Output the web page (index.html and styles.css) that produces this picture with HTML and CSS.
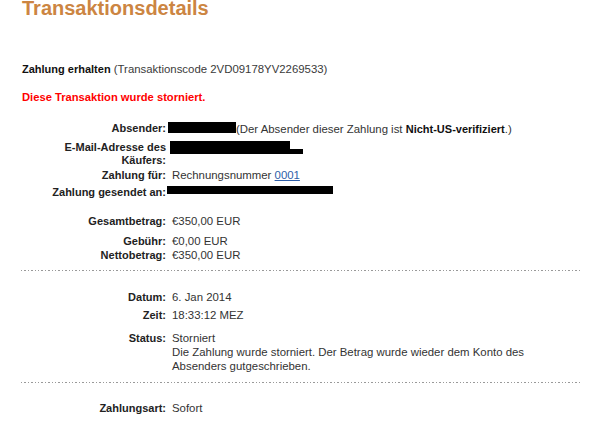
FILE: index.html
```html
<!DOCTYPE html>
<html lang="de">
<head>
  <meta charset="UTF-8">
  <title>Transaktionsdetails</title>
  <link rel="stylesheet" href="styles.css">
</head>
<body>

<div class="page">
  <h1 class="title">Transaktionsdetails</h1>

  <p class="intro"><b>Zahlung erhalten</b> (Transaktionscode 2VD09178YV2269533)</p>
  <p class="cancelled">Diese Transaktion wurde storniert.</p>

  <div class="row sp18">
    <div class="label">Absender:</div>
    <div class="value"><span class="redact redact-sender"></span>(Der Absender dieser Zahlung ist <b>Nicht-US-verifiziert</b>.)</div>
  </div>
  <div class="row sp5">
    <div class="label">E-Mail-Adresse des<br>Käufers:</div>
    <div class="value"><span class="redact redact-mail"></span><span class="redact redact-tail"></span></div>
  </div>
  <div class="row sp2">
    <div class="label">Zahlung für:</div>
    <div class="value">Rechnungsnummer <a href="#">0001</a></div>
  </div>
  <div class="row sp4">
    <div class="label">Zahlung gesendet an:</div>
    <div class="value"><span class="redact redact-to"></span></div>
  </div>

  <div class="row sp16">
    <div class="label">Gesamtbetrag:</div>
    <div class="value">€350,00 EUR</div>
  </div>
  <div class="row sp7">
    <div class="label">Gebühr:</div>
    <div class="value">€0,00 EUR</div>
  </div>
  <div class="row sp1">
    <div class="label">Nettobetrag:</div>
    <div class="value">€350,00 EUR</div>
  </div>

  <div class="divider div-first"></div>

  <div class="row sp20">
    <div class="label">Datum:</div>
    <div class="value">6. Jan 2014</div>
  </div>
  <div class="row sp5">
    <div class="label">Zeit:</div>
    <div class="value">18:33:12 MEZ</div>
  </div>
  <div class="row sp9 status">
    <div class="label">Status:</div>
    <div class="value">Storniert<br>Die Zahlung wurde storniert. Der Betrag wurde wieder dem Konto des Absenders gutgeschrieben.</div>
  </div>

  <div class="divider div-second"></div>

  <div class="row sp19">
    <div class="label">Zahlungsart:</div>
    <div class="value">Sofort</div>
  </div>
</div>

</body>
</html>
```

FILE: styles.css
```css
body {
  margin: 0;
  padding: 0;
  background: #fff;
  color: #333;
  font-family: "Liberation Sans", Arial, sans-serif;
  font-size: 11px;
  line-height: 13px;
}
.page {
  padding: 0 10px 0 21px;
}
.title {
  margin: -2px 0 0 1px;
  font-size: 20px;
  line-height: 20px;
  font-weight: bold;
  color: #cc8542;
}
.intro {
  margin: 45px 0 0 1px;
  color: #3a3a3a;
  font-size: 11.4px;
}
.intro b {
  color: #111;
  font-size: 11px;
}
.cancelled {
  margin: 15px 0 0 1px;
  color: #f00;
  font-weight: bold;
  font-size: 11.2px;
}
.row {
  display: flex;
  gap: 6px;
}
.label {
  width: 145px;
  flex-shrink: 0;
  text-align: right;
  font-weight: bold;
  color: #222;
}
.value {
  max-width: 390px;
  font-size: 11.4px;
}
.value b {
  color: #111;
  font-size: 11px;
}
.value a {
  color: #2e5ea8;
  text-decoration: underline;
}
.status .value {
  line-height: 14px;
}
.status .label {
  line-height: 14px;
}

/* spacing between table rows */
.sp1 { margin-top: 1px; }
.sp2 { margin-top: 2px; }
.sp4 { margin-top: 4px; }
.sp5 { margin-top: 5px; }
.sp7 { margin-top: 7px; }
.sp9 { margin-top: 9px; }
.sp16 { margin-top: 16px; }
.sp18 { margin-top: 18px; }
.sp19 { margin-top: 19px; }
.sp20 { margin-top: 20px; }

/* blacked out personal data */
.redact {
  display: inline-block;
  background: #000;
}
.redact-sender {
  width: 68px;
  height: 11px;
  margin-left: -4px;
  vertical-align: 0;
}
.redact-mail {
  width: 120px;
  height: 13px;
  margin-left: -2px;
  vertical-align: -1px;
}
.redact-tail {
  width: 13px;
  height: 5px;
  vertical-align: -1px;
}
.redact-to {
  width: 166px;
  height: 8px;
  margin-left: -5px;
  vertical-align: 2px;
}

.divider {
  height: 1px;
  background: repeating-linear-gradient(to right, #999 0 1.4px, transparent 1.4px 3.4px);
}
.div-first {
  margin-top: 8px;
}
.div-second {
  margin-top: 9px;
}
```
